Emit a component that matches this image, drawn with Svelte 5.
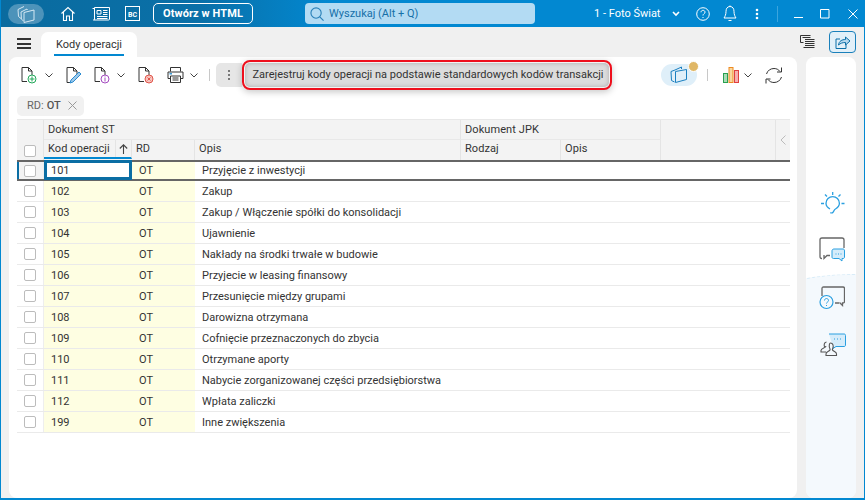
<script>
  const rows = [
    ['101', 'Przyjęcie z inwestycji'],
    ['102', 'Zakup'],
    ['103', 'Zakup / Włączenie spółki do konsolidacji'],
    ['104', 'Ujawnienie'],
    ['105', 'Nakłady na środki trwałe w budowie'],
    ['106', 'Przyjecie w leasing finansowy'],
    ['107', 'Przesunięcie między grupami'],
    ['108', 'Darowizna otrzymana'],
    ['109', 'Cofnięcie przeznaczonych do zbycia'],
    ['110', 'Otrzymane aporty'],
    ['111', 'Nabycie zorganizowanej części przedsiębiorstwa'],
    ['112', 'Wpłata zaliczki'],
    ['199', 'Inne zwiększenia']
  ];
</script>

<div class="window">
  <header class="topbar">
    <div class="logo">
      <svg width="22" height="20" viewBox="0 0 22 20" fill="none" stroke="#d5e8f3" stroke-width="1">
        <path d="M3 5.500 9 2.500M3 5.500 3.500 12.500 6 14.500M6 8l6-3 .3 1M6 8l.4 7 2 2" />
        <path d="M9 8.500l10-2.500v10l-10 2.500z" />
      </svg>
    </div>
    <svg class="ti home" width="16" height="16" viewBox="0 0 16 16" fill="none" stroke="#fff" stroke-width="1.100">
      <path d="M1.500 7.500 8 1.500l6.500 6M3.500 6v8.500h3v-4.500h3v4.500h3V6" />
    </svg>
    <svg class="ti news" width="18" height="14" viewBox="0 0 18 14" fill="none" stroke="#fff" stroke-width="1">
      <path d="M.5 1.500h2v10.500a1 1 0 0 1-1 1h15a1 1 0 0 0 1-1V.5h-15v12" />
      <path d="M5 3.500h4v3.500H5zM11 3.500h4.500M11 5.500h4.500M11 7.500h4.500M5 9.500h10.500M5 11.500h10.500" />
    </svg>
    <div class="bc">BC</div>
    <div class="html-btn">Otwórz w HTML</div>
    <div class="search">
      <svg width="14" height="14" viewBox="0 0 15 15" fill="none" stroke="#2a80b8" stroke-width="1.200">
        <circle cx="6.500" cy="6.500" r="5.500" /><path d="m10.500 10.500 4 4" />
      </svg>
      <span>Wyszukaj (Alt + Q)</span>
    </div>
    <div class="company">1 - Foto Świat</div>
    <svg class="chev" width="8" height="6" viewBox="0 0 8 6" fill="none" stroke="#fff" stroke-width="1.600"><path d="m1 1 3 3 3-3" /></svg>
    <svg class="ti help" width="14" height="14" viewBox="0 0 14 14" fill="none" stroke="#fff" stroke-width="1">
      <circle cx="7" cy="7" r="6.300" />
      <path d="M5 5.300C5 4 6 3.300 7 3.300s2 .7 2 1.900C9 6.700 7 6.700 7 8.500M7 10v1" />
    </svg>
    <svg class="ti bell" width="14" height="17" viewBox="0 0 14 17" fill="none" stroke="#fff" stroke-width="1">
      <path d="M7 1.500c-3 0-4 2.500-4 5 0 3-1 5-2 6.500h12c-1-1.500-2-3.500-2-6.500 0-2.500-1-5-4-5zM7 .5v1M5.500 15.500h3" />
    </svg>
    <svg class="ti dots" width="4" height="12" viewBox="0 0 4 12" fill="#fff"><circle cx="2" cy="2" r="1.300" /><circle cx="2" cy="6" r="1.300" /><circle cx="2" cy="10" r="1.300" /></svg>
    <div class="divider"></div>
    <svg class="ti min" width="10" height="10" viewBox="0 0 10 10" stroke="#fff"><path d="M0 8.500h9" /></svg>
    <svg class="ti max" width="10" height="10" viewBox="0 0 10 10" fill="none" stroke="#fff"><path d="M.5.500h8.500v8.500H.5z" /></svg>
    <svg class="ti close" width="10" height="10" viewBox="0 0 10 10" stroke="#fff"><path d="m.5.500 9 9M9.500.500l-9 9" /></svg>
  </header>

  <div class="body">
    <div class="main">
      <div class="tabbar">
        <div class="burger"><i></i><i></i><i></i></div>
        <div class="tab"><span>Kody operacji</span></div>
        <div class="tab-actions">
          <svg width="15" height="14" viewBox="0 0 15 14" fill="none" stroke="#333" stroke-width="1">
            <path d="M.5 .5h10M.5 .5v7h3M2.500 2.500h8M5 4.500h9.500M5 6.500h9.500M5 8.500h9.500M5 10.500h9.500M3.500 12.500h11" />
          </svg>
          <div class="share">
            <svg width="16" height="15" viewBox="0 0 16 15" fill="none" stroke="#0b6fa8" stroke-width="1">
              <path d="M11 9v4.500H1V4h4" /><path d="M3.500 10c.5-4 3.500-5.500 7-5.500V2l4.500 4-4.500 4V7.500c-3 0-5 .7-7 2.500z" fill="#b6d8ee" />
            </svg>
          </div>
        </div>
      </div>
      <section class="card">
        <div class="toolbar">
          <svg class="doc" width="16" height="17" viewBox="0 0 16 17" fill="none">
            <path d="M6 14.500H1V.5h6.500L11 4v4M7.500.5V4H11" stroke="#333" />
            <circle cx="11" cy="12" r="4" stroke="#22a85a" /><path d="M11 9.500v5M8.500 12h5" stroke="#22a85a" />
          </svg>
          <svg class="ch c1" width="8" height="5" viewBox="0 0 8 5" fill="none" stroke="#444"><path d="m.5.500 3.500 3.500 3.500-3.500" /></svg>
          <svg class="doc d2" width="16" height="17" viewBox="0 0 16 17" fill="none">
            <path d="M4 15.500H1V.5h6.500L11 4v3M7.500.5V4H11" stroke="#333" />
            <path d="m5 13 8-8 2 2-8 8-3 1z" fill="#9cc9ea" stroke="#2a8ad0" />
          </svg>
          <svg class="doc d3" width="16" height="17" viewBox="0 0 16 17" fill="none">
            <path d="M6 14.500H1V.5h6.500L11 4v4M7.500.5V4H11" stroke="#333" />
            <circle cx="11" cy="12" r="4" stroke="#a44cc0" /><path d="M11 11v3.500M11 9.500v1" stroke="#a44cc0" />
          </svg>
          <svg class="ch c2" width="8" height="5" viewBox="0 0 8 5" fill="none" stroke="#444"><path d="m.5.500 3.500 3.500 3.500-3.500" /></svg>
          <svg class="doc d4" width="16" height="17" viewBox="0 0 16 17" fill="none">
            <path d="M6 14.500H1V.5h6.500L11 4v4M7.500.5V4H11" stroke="#333" />
            <circle cx="11" cy="12" r="4" fill="#f8c5c0" stroke="#e0554a" /><path d="m9.500 10.500 3 3M12.500 10.500l-3 3" stroke="#e0554a" />
          </svg>
          <svg class="print" width="17" height="16" viewBox="0 0 17 16" fill="none" stroke="#333" stroke-width="1">
            <path d="M3.500 4.500V.5h10v4M3.500 11.500H1V5h15v6.500h-2.500M3.500 9h10v6.500h-10zM5.500 11h6M5.500 13h6" />
            <path d="M2.500 6.800h2.500" stroke="#1a8ad0" stroke-width="1.300" />
          </svg>
          <svg class="ch c3" width="8" height="5" viewBox="0 0 8 5" fill="none" stroke="#444"><path d="m.5.500 3.500 3.500 3.500-3.500" /></svg>
          <div class="sep s1"></div>
          <div class="more"><b></b><b></b><b></b></div>
          <div class="hl"><div class="hl-btn">Zarejestruj kody operacji na podstawie standardowych kodów transakcji</div></div>
          <div class="spring"></div>
          <div class="pill">
            <svg width="20" height="18" viewBox="0 0 20 18" fill="none" stroke="#1a7fc0" stroke-width="1">
              <path d="M6 4 12.500 1v2M6 4 2 5.500l.5 9 3 1.500" /><path d="m6.500 5.500 11-2v10l-11 3z" />
            </svg>
            <div class="dot"></div>
          </div>
          <div class="sep s2"></div>
          <svg class="bars" width="17" height="16" viewBox="0 0 17 16">
            <rect x=".5" y="6.500" width="4" height="9" fill="#a8dcb5" stroke="#28a050" />
            <rect x="6" y=".5" width="4" height="15" fill="#f8d8a0" stroke="#ee8a20" />
            <rect x="11.500" y="3.500" width="4" height="12" fill="#f5b0b0" stroke="#e04040" />
          </svg>
          <svg class="ch c4" width="8" height="5" viewBox="0 0 8 5" fill="none" stroke="#444"><path d="m.5.500 3.500 3.500 3.500-3.500" /></svg>
          <svg class="refresh" width="18" height="17" viewBox="0 0 18 17" fill="none" stroke="#333" stroke-width="1">
            <path d="M1.500 7C2.500 3.500 5.500 1.500 9 1.500c2.500 0 4.500 1 6 3M16.500 .5v4.500H12" />
            <path d="M16.500 10c-1 3.500-4 5.500-7.500 5.500-2.500 0-4.500-1-6-3M1 16.500V12h4.500" />
          </svg>
        </div>

        <div class="filter-row">
          <div class="chip">RD: <strong>OT</strong>
            <svg width="9" height="9" viewBox="0 0 9 9" stroke="#999"><path d="m.5.500 8 8M8.500.500l-8 8" /></svg>
          </div>
        </div>

        <div class="table">
          <div class="thead">
            <div class="th-check"><span class="cb"></span></div>
            <div class="h top st">Dokument ST</div>
            <div class="h top jpk">Dokument JPK</div>
            <div class="h blank"></div>
            <div class="h collapse">
              <svg width="6" height="10" viewBox="0 0 6 10" fill="none" stroke="#bbb"><path d="M5.500.5 1 5l4.500 4.500" /></svg>
            </div>
            <div class="h sub kod"><span>Kod operacji</span>
              <em><svg width="9" height="10" viewBox="0 0 9 10" fill="none" stroke="#444" stroke-width="1.100"><path d="M4.500 10V1M.8 4.500 4.500.8l3.700 3.700" /></svg></em>
            </div>
            <div class="h sub">RD</div>
            <div class="h sub">Opis</div>
            <div class="h sub">Rodzaj</div>
            <div class="h sub">Opis</div>
          </div>
          <div class="tbody">
            {#each rows as r, i}
              <div class="row" class:active={i === 0}>
                <div class="c-check"><span class="cb"></span></div>
                <div class="c-kod">{r[0]}</div>
                <div class="c-rd">OT</div>
                <div class="c-opis">{r[1]}</div>
              </div>
            {/each}
          </div>
        </div>
      </section>
    </div>
    <aside class="side">
      <div class="curve"></div>
      <svg class="si bulb" width="24" height="22" viewBox="0 0 24 22" fill="none" stroke="#2a9fe0" stroke-width="1.300">
        <path d="M9 17c-2-1-4-3-4-5.700a6.700 6.700 0 0 1 13.400 0c0 2.700-2 4.500-4 5.700-1 .5-1.500 2-2.500 3.500-.5.5-2 .5-2.500 0" />
        <path d="M11.700 0v3M4 2.500l2 2M19.500 2.500l-2 2M0 11.500h3M20.500 11.500h3" />
      </svg>
      <svg class="si s-chat" width="26" height="26" viewBox="0 0 26 26" fill="none">
        <path d="M3 21.500c-1.500 0-2-.5-2-2V3c0-1.500.5-2 2-2h20c1.500 0 2 .5 2 2v8M11 18.500H8l-3 3v-3.500" stroke="#666" stroke-width="1.300" />
        <path d="M13 14c0-1 .5-2 2-2h9c1 0 1.500.5 1.500 2v6c0 1-.5 1.500-1.500 1.500h-1v2.500l-3-2.500h-5.500c-1 0-1.500-.5-1.500-1.500z" fill="#d5ecfa" stroke="#2a9fe0" />
        <path d="M16.500 17h1M19 17h1M21.500 17h1" stroke="#2a9fe0" />
      </svg>
      <svg class="si s-help" width="26" height="24" viewBox="0 0 26 24" fill="none">
        <path d="M3 10V2.500C3 1.500 3.500 1 4.500 1H24c1 0 1.500.5 1.500 1.500v13c0 1-.5 1.500-1.500 1.500h-.5v2.500l-3-3M20 17h-4" stroke="#666" stroke-width="1.300" />
        <circle cx="7.500" cy="16" r="6.500" fill="#f4f9fd" stroke="#2a9fe0" stroke-width="1.200" />
        <path d="M5.500 14.500c0-1.200 1-2 2-2s2 .8 2 2c0 1.500-2 1.500-2 3M7.500 19v1" stroke="#2a9fe0" />
      </svg>
      <svg class="si s-people" width="26" height="24" viewBox="0 0 26 24" fill="none">
        <path d="M9 1h15c1 0 1.500.5 1.500 1.500V12c0 1-.5 1.500-1.500 1.500h-8l-3 2v-2" fill="#d5ecfa" stroke="#2a9fe0" />
        <path d="M14 6h1M17 6h1M20 6h1" stroke="#2a9fe0" />
        <path d="M5 14.500c-1.500-2-1-5 1.500-5.500M6 13c0 2-5 2-5 4.500V19h5M10.500 10c2.500 0 3.500 3 2 6-.5 1 0 1.500 2 2.500 1 .5 2 1 2 2.500v1.500H6V21c0-1.500 1-2 2-2.500 2-1 2.500-1.500 2-2.500-1.500-3-.5-6 .5-6z" fill="#f4f9fd" stroke="#555" stroke-width="1.100" />
      </svg>
    </aside>
  </div>
</div>

<style>
  :global(body) { margin: 0; }
  .window {
    width: 865px; height: 500px; box-sizing: border-box;
    display: flex; flex-direction: column; overflow: hidden;
    background: #f0f0f0; font-family: Roboto, sans-serif; color: #333;
    border-left: 1px solid #0288d1; border-right: 1px solid #0288d1; border-bottom: 2px solid #0288d1;
  }
  .topbar {
    height: 27px; flex: none; margin: 0 -1px; display: flex; align-items: center;
    background: linear-gradient(90deg, #0a6b9f 0, #0a70a8 200px, #0288d1 330px);
    color: #fff;
  }
  .ti, .chev { flex: none; }
  .logo {
    width: 36px; height: 20px; margin-left: 8px; border-radius: 10px;
    background: #4d93ba; display: flex; align-items: center; justify-content: center;
  }
  .home { margin-left: 16px; }
  .news { margin-left: 16px; }
  .bc {
    width: 13px; height: 13px; margin-left: 15px; border: 1px solid #fff;
    font-size: 7px; font-weight: 700; line-height: 17px; text-align: center; flex: none;
  }
  .html-btn {
    margin-left: 13px; width: 100px; height: 21px; box-sizing: border-box; flex: none;
    border: 1px solid #fff; border-radius: 5px; text-align: center;
    font-size: 11px; font-weight: 700; line-height: 19px; letter-spacing: .1px;
  }
  .search {
    margin-left: 52px; width: 230px; height: 21px; box-sizing: border-box; border-radius: 4px; flex: none;
    background: #b3dbf3; display: flex; align-items: center; gap: 5px; padding-left: 5px;
    font-size: 11px; color: #1670a8;
  }
  .company { margin-left: 59px; width: 71px; font-size: 11px; white-space: nowrap; flex: none; }
  .chev { margin-left: 7px; }
  .help { margin-left: 16px; }
  .bell { margin-left: 13px; }
  .dots { margin-left: 18px; }
  .divider { margin-left: 18px; width: 1px; height: 16px; background: #3ca5de; flex: none; }
  .min { margin-left: 16px; }
  .max { margin-left: 16px; }
  .close { margin-left: 18px; }

  .body { flex: 1; display: flex; min-height: 0; }
  .main { width: 796px; flex: none; display: flex; flex-direction: column; }
  .tabbar { height: 30px; flex: none; display: flex; position: relative; }
  .burger { width: 14px; margin: 11px 0 0 16px; height: 11px; display: flex; flex-direction: column; justify-content: space-between; }
  .burger i { display: block; height: 2px; background: #333; }
  .tab {
    margin: 5px 0 0 10px; width: 96px; height: 25px; background: #fff; border-radius: 7px 7px 0 0;
    font-size: 11px; box-sizing: border-box; padding: 6px 0 0 13px;
  }
  .tab span { display: block; width: 68px; padding-left: 2px; height: 16px; line-height: 14px; border-bottom: 2px solid #0288d1; white-space: nowrap; }
  .tab-actions { position: absolute; left: 799px; top: 4px; display: flex; align-items: center; gap: 14px; width: 64px; }
  .share {
    width: 27px; height: 22px; box-sizing: border-box; border: 1px solid #1a80bb; border-radius: 4px; background: #e2f0f9;
    display: flex; align-items: center; justify-content: center; flex: none;
  }
  .card { flex: 1; margin-left: 8px; background: #fff; border-radius: 8px; padding: 0 8px; display: flex; flex-direction: column; min-height: 0; }

  .toolbar { height: 36px; flex: none; display: flex; align-items: center; padding-left: 4px; }
  .toolbar svg { flex: none; }
  .c1 { margin-left: 8px; }
  .d2 { margin-left: 13px; }
  .d3 { margin-left: 12px; }
  .c2 { margin-left: 7px; }
  .d4 { margin-left: 13px; }
  .print { margin-left: 13px; }
  .c3 { margin-left: 6px; }
  .sep { width: 1px; height: 12px; background: #c8c8c8; flex: none; }
  .s1 { margin-left: 11px; }
  .more {
    margin-left: 6px; width: 26px; height: 24px; background: #e6e6e6; border-radius: 5px 0 0 5px; flex: none;
    display: flex; flex-direction: column; align-items: center; justify-content: center; gap: 2px;
  }
  .more b { width: 2px; height: 2px; background: #555; border-radius: 50%; }
  .hl {
    width: 370px; height: 30px; box-sizing: border-box; flex: none;
    border: 2px solid #ee0f1c; border-radius: 8px; padding: 1px; background: #f2f2f2;
    box-shadow: 0 2px 7px rgba(0,0,0,.22);
  }
  .hl-btn {
    height: 24px; border-radius: 5px; background: #dcdcdc; padding-left: 2px;
    box-shadow: inset 0 0 4px #aaa;
    font-size: 11px; line-height: 24px; text-align: center; white-space: nowrap; color: #333;
  }
  .spring { flex: 1; }
  .pill {
    width: 36px; height: 22px; border-radius: 11px; background: #dfeff9; position: relative; flex: none;
    display: flex; align-items: center; justify-content: center;
  }
  .dot { position: absolute; right: -2px; top: -3px; width: 9px; height: 9px; background: #e0b765; border-radius: 50%; border: 1px solid #fff; }
  .s2 { margin-left: 10px; }
  .bars { margin-left: 15px; }
  .c4 { margin-left: 4px; }
  .refresh { margin-left: 13px; margin-right: 6px; }

  .filter-row { height: 26px; flex: none; padding-top: 1px; box-sizing: border-box; }
  .chip {
    display: inline-flex; align-items: center; height: 20px; padding: 0 7px 0 10px; background: #f1f1f1; border-radius: 5px;
    font-size: 11px; color: #666; gap: 3px;
  }
  .chip strong { font-weight: 500; color: #555; margin-right: 4px; }

  .table { width: 773px; font-size: 11px; }
  .thead {
    display: grid; height: 43px; box-sizing: border-box;
    grid-template-columns: 27px 88px 63px 266px 100px 100px 115px 14px;
    grid-template-rows: 20px 20px;
    background: #f3f3f3; border-top: 1px solid #e8e8e8; border-bottom: 2px solid #666;
  }
  .th-check { grid-row: 1 / 3; grid-column: 1; border-right: 1px solid #e4e4e4; display: flex; align-items: flex-end; justify-content: center; padding-bottom: 3px; }
  .h { padding-left: 4px; line-height: 19px; border-right: 1px solid #e4e4e4; font-size: 11px; color: #333; white-space: nowrap; letter-spacing: .08px; }
  .top { border-bottom: 1px solid #e8e8e8; }
  .st { grid-column: 2 / 5; grid-row: 1; }
  .jpk { grid-column: 5 / 7; grid-row: 1; }
  .blank { grid-column: 7; grid-row: 1 / 3; }
  .collapse { grid-column: 8; grid-row: 1 / 3; border-right: 0; display: flex; align-items: center; justify-content: center; padding: 0; }
  .sub { grid-row: 2; line-height: 17px; }
  .kod { display: flex; justify-content: space-between; padding-right: 0; border-bottom: 2px solid #0288d1; height: 19px; box-sizing: border-box; }
  .kod em { width: 16px; border-left: 1px solid #e4e4e4; display: flex; align-items: center; justify-content: center; height: 17px; box-sizing: border-box; }
  .cb { display: block; width: 10px; height: 10px; border: 1px solid #bcbcbc; border-radius: 2px; background: #fff; }
  .row {
    display: grid; grid-template-columns: 27px 88px 63px 1fr; grid-template-rows: 20px; height: 21px; box-sizing: border-box;
    border-bottom: 1px solid #eaeaea; line-height: 22px;
  }
  .c-check { display: flex; align-items: center; justify-content: center; border-right: 1px solid #eee; }
  .c-kod { background: #fefee2; padding-left: 7px; }
  .c-rd { background: #fefee2; padding-left: 7px; }
  .c-opis { padding-left: 7px; white-space: nowrap; }
  .active { height: 19px; grid-template-rows: 17px; border-bottom: 2px solid #666; line-height: 18px; }
  .active .c-check { background: #f3f3f3; box-shadow: inset 2px 0 0 #0b6ea4; }
  .active .c-kod {
    background: #fff; outline: 3px solid #0b6ea4; outline-offset: -3px;
    margin: -2px 0 -1px; line-height: 22px; position: relative;
  }

  .side { width: 50px; flex: none; margin: 30px 0 0 9px; background: #fff; border-radius: 8px; position: relative; overflow: hidden; }
  .curve {
    position: absolute; left: -135px; top: 217px; width: 360px; height: 260px; border-radius: 50%;
    background: #f4f9fd; border: 1px dashed #d8ecf8;
  }
  .si { position: absolute; }
  .bulb { left: 15px; top: 135px; }
  .s-chat { left: 13px; top: 180px; }
  .s-help { left: 13px; top: 229px; }
  .s-people { left: 14px; top: 276px; }
</style>
